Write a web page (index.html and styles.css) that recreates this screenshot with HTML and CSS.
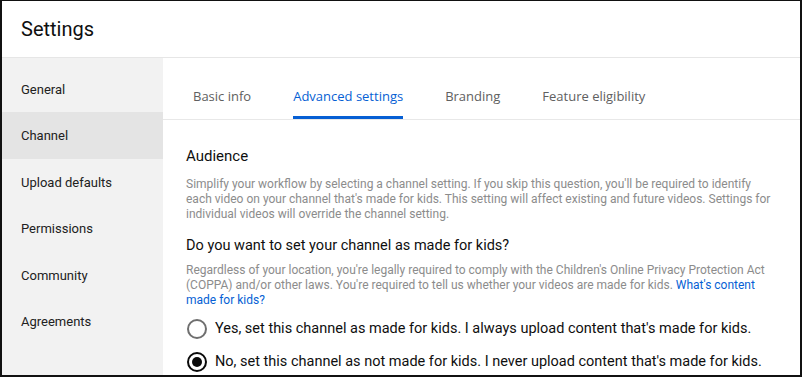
FILE: index.html
```html
<!DOCTYPE html>
<html lang="en">
<head>
    <meta charset="UTF-8">
    <meta name="viewport" content="width=device-width, initial-scale=1.0">
    <title>Settings</title>
    <link rel="stylesheet" href="styles.css">
</head>
<body>
    <div class="frame">
        <div class="top">
            <h1>Settings</h1>
        </div>
        <div class="main">
            <ul class="side">
                <li>General</li>
                <li class="sel">Channel</li>
                <li>Upload defaults</li>
                <li>Permissions</li>
                <li>Community</li>
                <li>Agreements</li>
            </ul>
            <div class="pane">
                <div class="tabs">
                    <span class="tab">Basic info</span>
                    <span class="tab on">Advanced settings</span>
                    <span class="tab">Branding</span>
                    <span class="tab">Feature eligibility</span>
                </div>
                <div class="body">
                    <h2>Audience</h2>
                    <p class="note">Simplify your workflow by selecting a channel setting. If you skip this question, you'll be required to identify each video on your channel that's made for kids. This setting will affect existing and future videos. Settings for individual videos will override the channel setting.</p>
                    <h3>Do you want to set your channel as made for kids?</h3>
                    <p class="note last">Regardless of your location, you're legally required to comply with the Children's Online Privacy Protection Act (COPPA) and/or other laws. You're required to tell us whether your videos are made for kids. <a href="#">What's content made for kids?</a></p>
                    <div class="opt">
                        <span class="radio"></span>
                        <span>Yes, set this channel as made for kids. I always upload content that's made for kids.</span>
                    </div>
                    <div class="opt">
                        <span class="radio checked"></span>
                        <span>No, set this channel as not made for kids. I never upload content that's made for kids.</span>
                    </div>
                </div>
            </div>
        </div>
    </div>
</body>
</html>
```

FILE: styles.css
```css
* {
    margin: 0;
    padding: 0;
    box-sizing: border-box;
}

body {
    background-color: #000;
    font-family: Roboto, "Liberation Sans", sans-serif;
    color: #0f0f0f;
}

.frame {
    width: 802px;
    height: 377px;
    overflow: hidden;
    border-style: solid;
    border-color: #111;
    border-width: 1px 2px 2px 2px;
    background-color: #fff;
    display: flex;
    flex-direction: column;
}

.top {
    height: 57px;
    flex: none;
    display: flex;
    align-items: center;
    padding-left: 19px;
    border-bottom: 1px solid #e6e6e6;
}

h1 {
    font-size: 20px;
    font-weight: 400;
}

.main {
    display: flex;
    flex: 1;
}

.side {
    list-style: none;
    width: 161px;
    flex: none;
    background-color: #f2f2f2;
    padding-top: 8px;
}

.side li {
    height: 46.4px;
    line-height: 47px;
    padding-left: 19px;
    font-size: 13px;
    color: #212121;
}

.side .sel {
    background-color: #e4e4e4;
}

.pane {
    flex: 1;
}

.tabs {
    height: 62px;
    display: flex;
    align-items: flex-end;
    gap: 42px;
    padding-left: 30px;
    border-bottom: 1px solid #e8e8e8;
}

.tab {
    font-family: "Open Sans", sans-serif;
    font-size: 13px;
    color: #606060;
    padding-bottom: 11px;
    border-bottom: 3px solid transparent;
}

.tab.on {
    color: #065fd4;
    border-bottom-color: #065fd4;
}

.body {
    padding: 27px 10px 0 23px;
}

h2 {
    font-size: 15px;
    font-weight: 400;
    margin-bottom: 12px;
}

h3 {
    font-size: 14.5px;
    font-weight: 400;
    margin-bottom: 9px;
}

.note {
    font-size: 12px;
    line-height: 15px;
    color: #8c8c8c;
    margin-bottom: 15px;
    width: 590px;
}

.note.last {
    margin-bottom: 4px;
}

.note a {
    color: #065fd4;
    text-decoration: none;
}

.opt {
    display: flex;
    align-items: center;
    gap: 8px;
    font-size: 14.5px;
    height: 33px;
    margin-left: 1px;
}

.radio {
    width: 20px;
    height: 20px;
    border-radius: 50%;
    border: 2px solid #6f6f6f;
    flex: none;
    display: flex;
    align-items: center;
    justify-content: center;
}

.radio.checked {
    border-color: #0a0a0a;
}

.radio.checked::after {
    content: "";
    width: 10px;
    height: 10px;
    border-radius: 50%;
    background-color: #0a0a0a;
}
```
